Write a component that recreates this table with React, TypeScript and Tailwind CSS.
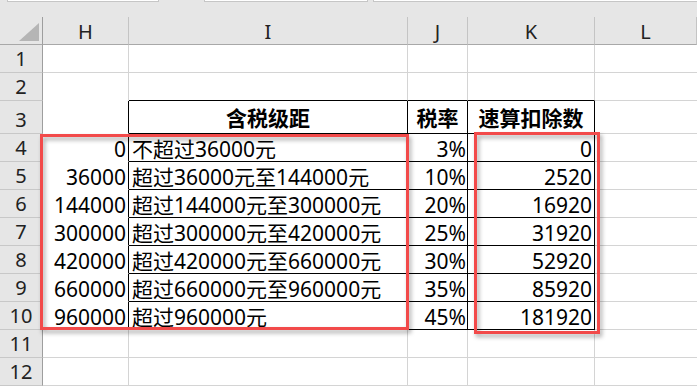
const cols = ["H", "I", "J", "K", "L"]

type Row = {
  n: number
  h?: string
  i?: string
  j?: string
  k?: string
}

const rows: Row[] = [
  { n: 1 },
  { n: 2 },
  { n: 3 },
  { n: 4, h: "0", i: "不超过36000元", j: "3%", k: "0" },
  { n: 5, h: "36000", i: "超过36000元至144000元", j: "10%", k: "2520" },
  { n: 6, h: "144000", i: "超过144000元至300000元", j: "20%", k: "16920" },
  { n: 7, h: "300000", i: "超过300000元至420000元", j: "25%", k: "31920" },
  { n: 8, h: "420000", i: "超过420000元至660000元", j: "30%", k: "52920" },
  { n: 9, h: "660000", i: "超过660000元至960000元", j: "35%", k: "85920" },
  { n: 10, h: "960000", i: "超过960000元", j: "45%", k: "181920" },
  { n: 11 },
  { n: 12 },
]

function SheetRow({ row }: { row: Row }) {
  const height = row.n === 3 ? "h-[33px]" : "h-[28px]"
  const inTable = row.n >= 3 && row.n <= 10
  const tableBottom = row.n >= 2 && row.n <= 10
  const hBottom = row.n >= 2 && row.n <= 9 ? "border-b-white" : "border-b-[#d4d4d4]"
  const tBottom = tableBottom ? "border-b-black" : "border-b-[#d4d4d4]"
  const tRight = inTable ? "border-r-black" : "border-r-[#d4d4d4]"

  return (
    <>
      <div
        className={`${height} flex items-end justify-center border-r border-b border-r-[#9e9e9e] border-b-[#c8c8c8] bg-[#e6e6e6] pb-[1px] text-[20px] leading-[24px] text-[#222]`}
      >
        {row.n}
      </div>
      <div
        className={`${height} flex items-end justify-end border-r border-b pr-[2px] text-[21px] leading-[24px] ${inTable ? "border-r-black" : "border-r-[#d4d4d4]"} ${hBottom}`}
      >
        {row.h}
      </div>
      {row.n === 3 ? (
        <>
          <div className={`${height} flex items-center justify-center border-r border-b ${tRight} ${tBottom} pt-[1px] text-[21px] font-bold leading-[24px]`}>
            含税级距
          </div>
          <div className={`${height} flex items-center justify-center border-r border-b ${tRight} ${tBottom} pt-[1px] text-[21px] font-bold leading-[24px]`}>
            税率
          </div>
          <div className={`${height} flex items-center justify-center border-r border-b ${tRight} ${tBottom} pt-[1px] text-[21px] font-bold leading-[24px]`}>
            速算扣除数
          </div>
        </>
      ) : (
        <>
          <div className={`${height} flex items-end justify-start overflow-hidden border-r border-b pl-[3px] text-[21px] leading-[24px] whitespace-nowrap ${tRight} ${tBottom}`}>
            {row.i}
          </div>
          <div className={`${height} flex items-end justify-end border-r border-b pr-[1px] text-[21px] leading-[24px] ${tRight} ${tBottom}`}>
            {row.j}
          </div>
          <div className={`${height} flex items-end justify-end border-r border-b pr-[2px] text-[21px] leading-[24px] ${tRight} ${tBottom}`}>
            {row.k}
          </div>
        </>
      )}
      <div className={`${height} border-b border-b-[#d4d4d4]`} />
    </>
  )
}

export default function App() {
  return (
    <div className="relative h-[386px] w-[697px] overflow-hidden bg-white font-['Noto_Sans','Noto_Sans_CJK_SC',sans-serif] text-black">
      {/* strip above the column letters */}
      <div className="flex h-[17px] items-start bg-[#e6e6e6]">
        <div className="ml-[7px] h-[2px] w-[152px] border-x border-b border-[#c6c6c6] bg-white" />
        <div className="ml-[45px] h-[2px] w-[164px] border-x border-b border-[#c6c6c6] bg-white" />
        <div className="ml-[5px] h-[2px] flex-1 border-l border-b border-[#c6c6c6] bg-white" />
      </div>

      <div className="grid grid-cols-[43px_86px_279px_60px_127px_1fr]">
        {/* column header */}
        <div className="flex h-[28px] items-end justify-end border-r border-b border-r-[#9e9e9e] border-b-[#a8a8a8] bg-[#e6e6e6] pr-[3px] pb-[3px]">
          <svg width="20" height="18" viewBox="0 0 20 18">
            <polygon points="20,0 20,18 0,18" fill="#b5b5b5" />
          </svg>
        </div>
        {cols.map((c) => (
          <div
            key={c}
            className="flex h-[28px] items-center justify-center border-r border-b border-r-[#c4c4c4] border-b-[#a8a8a8] bg-[#e6e6e6] pt-[3px] text-[20px] leading-[24px] text-[#222]"
          >
            {c}
          </div>
        ))}

        {rows.map((r) => (
          <SheetRow key={r.n} row={r} />
        ))}
      </div>

      {/* red highlight boxes */}
      <div className="absolute top-[134px] left-[40px] h-[196px] w-[369px] border-[3px] border-[#f24a4a] drop-shadow-[2px_3px_2px_rgba(0,0,0,0.35)]" />
      <div className="absolute top-[132px] left-[474px] h-[202px] w-[126px] border-[3px] border-[#f24a4a] drop-shadow-[2px_3px_2px_rgba(0,0,0,0.35)]" />
    </div>
  )
}
